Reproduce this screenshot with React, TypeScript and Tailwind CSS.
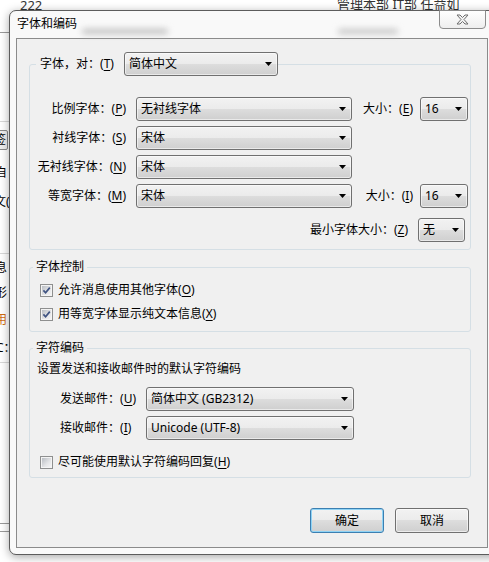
import React from 'react';

// Win7 style "字体和编码" dialog over a blurred mail client

function Arrow() {
  return (
    <svg width="7" height="4" viewBox="0 0 7 4" className="shrink-0">
      <path d="M0 0H7L3.5 4Z" fill="#000" />
    </svg>
  );
}

function Combo({ value, cls }: { value: string; cls: string }) {
  return (
    <div
      className={`flex h-[24px] shrink-0 items-center justify-between rounded-[3px] border border-[#707070] bg-[linear-gradient(#f2f2f2_0%,#ebebeb_50%,#dddddd_50%,#cfcfcf_100%)] pl-[4px] pr-[5px] shadow-[inset_0_0_0_1px_rgba(255,255,255,0.55)] ${cls}`}
    >
      <span className="whitespace-nowrap">{value}</span>
      <Arrow />
    </div>
  );
}

function Key({ text, k }: { text: string; k: string }) {
  return (
    <>
      {text}(<span className="underline underline-offset-[2px]">{k}</span>)
    </>
  );
}

function Check({ checked }: { checked: boolean }) {
  return (
    <span className="flex h-[13px] w-[13px] shrink-0 items-center justify-center border border-[#8e8f8f] bg-[#f4f4f4]">
      <span className="flex h-[9px] w-[9px] items-center justify-center bg-[linear-gradient(135deg,#b9bdc3_0%,#e4e5e7_60%,#f4f4f5_100%)]">
        {checked && (
          <svg width="9" height="9" viewBox="0 0 9 9">
            <path d="M1.4 4.4L3.6 6.8L7.8 1.6" fill="none" stroke="#3f5382" strokeWidth="1.7" />
          </svg>
        )}
      </span>
    </span>
  );
}

function Button({ label, primary }: { label: string; primary?: boolean }) {
  return (
    <div
      className={`flex h-[25px] w-[74px] items-center justify-center rounded-[3px] border bg-[linear-gradient(#f2f2f2_0%,#ebebeb_50%,#dddddd_50%,#cfcfcf_100%)] ${
        primary
          ? 'border-[#3c7fb1] shadow-[inset_0_0_0_1px_#8fd3f5]'
          : 'border-[#707070] shadow-[inset_0_0_0_1px_rgba(255,255,255,0.6)]'
      }`}
    >
      {label}
    </div>
  );
}

export default function App() {
  return (
    <div className="relative h-[562px] w-[489px] overflow-hidden bg-white font-['Noto_Sans','Noto_Sans_CJK_SC',sans-serif] text-[12px] leading-[16px] text-black">
      {/* mail client behind the dialog */}
      <span className="absolute left-[20px] top-[1px] text-[13px] leading-[9px] text-[#333]">222</span>
      <span className="absolute left-[337px] top-[-1px] text-[13px] leading-[11px] text-[#333]">管理本部 IT部 任益如</span>
      <div className="absolute left-0 top-[32px] h-px w-[10px] bg-[#9a9a9a]" />
      <div className="absolute left-0 top-[121px] h-px w-[10px] bg-[#d8d8d8]" />
      <div className="absolute left-[-8px] top-[130px] flex h-[20px] w-[16px] items-center justify-end rounded-[2px] border border-[#8a8a8a] bg-[#eeeeee] pr-[1px] text-[12px]">签</div>
      <span className="absolute left-[-5px] top-[165px] text-[12px]">自</span>
      <span className="absolute left-[-6px] top-[194px] text-[12px]">文(</span>
      <div className="absolute left-0 top-[253px] h-px w-[10px] bg-[#d8d8d8]" />
      <span className="absolute left-[-5px] top-[260px] text-[12px]">息</span>
      <span className="absolute left-[-5px] top-[285px] text-[12px]">形</span>
      <span className="absolute left-[-5px] top-[312px] text-[12px] text-[#d06a10]">用</span>
      <span className="absolute left-[-4px] top-[340px] text-[12px]">C：</span>
      <div className="absolute left-0 top-[362px] h-px w-[10px] bg-[#d8d8d8]" />
      <div className="absolute left-0 top-[523px] h-px w-[10px] bg-[#9a9a9a]" />
      <div className="absolute left-0 top-[531px] h-px w-[10px] bg-[#9a9a9a]" />

      {/* dialog window */}
      <div className="absolute left-[9px] top-[10px] h-[545px] w-[500px] rounded-l-[7px] border border-[#5c5c5c] bg-[#f9f9f9] shadow-[0_2px_10px_rgba(0,0,0,0.35)]">
        <div className="absolute left-[72px] top-[18px] h-[5px] w-[86px] rounded-full bg-[#bdbdbd] blur-[3px]" />
        <div className="absolute left-[328px] top-[18px] h-[5px] w-[60px] rounded-full bg-[#c4c4c4] blur-[3px]" />

        {/* close button */}
        <div className="absolute left-[429px] top-[-1px] flex h-[19px] w-[47px] items-center justify-center rounded-b-[4px] border border-[#8c8c8c] bg-[linear-gradient(#ffffff,#eeeeee)]">
          <svg width="13" height="11" viewBox="0 0 13 11">
            <path
              d="M1 1H4L6.5 3.5L9 1H12L8 5.5L12 10H9L6.5 7.5L4 10H1L5 5.5Z"
              fill="#f2f2f2"
              stroke="#6f6f6f"
              strokeWidth="1"
              strokeLinejoin="round"
            />
          </svg>
        </div>

        <div className="relative flex h-[27px] items-center pb-[2px] pl-[7px]">字体和编码</div>

        <div className="ml-[6px] h-[510px] w-[472px] border border-[#8b8b8b] bg-[#f0f0f0] pt-[13px]">
          {/* fonts */}
          <fieldset className="ml-[12px] w-[442px] rounded-[3px] border border-[#d5dfe5] pb-[7px]">
            <legend className="ml-[6px] flex items-center pl-[4px]">
              <span className="w-[84px] whitespace-nowrap">
                <Key text="字体，对：" k="T" />
              </span>
              <Combo value="简体中文" cls="w-[154px]" />
            </legend>

            <div className="flex flex-col gap-[5px] pt-[21px]">
              <div className="flex h-[24px] items-center">
                <span className="w-[96px] whitespace-nowrap text-right">
                  <Key text="比例字体：" k="P" />
                </span>
                <Combo value="无衬线字体" cls="ml-[10px] w-[216px]" />
                <span className="w-[61px] whitespace-nowrap text-right">
                  <Key text="大小：" k="E" />
                </span>
                <Combo value="16" cls="ml-[7px] w-[48px]" />
              </div>
              <div className="flex h-[24px] items-center">
                <span className="w-[96px] whitespace-nowrap text-right">
                  <Key text="衬线字体：" k="S" />
                </span>
                <Combo value="宋体" cls="ml-[10px] w-[216px]" />
              </div>
              <div className="flex h-[24px] items-center">
                <span className="w-[96px] whitespace-nowrap text-right">
                  <Key text="无衬线字体：" k="N" />
                </span>
                <Combo value="宋体" cls="ml-[10px] w-[216px]" />
              </div>
              <div className="flex h-[24px] items-center">
                <span className="w-[96px] whitespace-nowrap text-right">
                  <Key text="等宽字体：" k="M" />
                </span>
                <Combo value="宋体" cls="ml-[10px] w-[216px]" />
                <span className="w-[61px] whitespace-nowrap text-right">
                  <Key text="大小：" k="I" />
                </span>
                <Combo value="16" cls="ml-[7px] w-[48px]" />
              </div>
            </div>

            <div className="mt-[10px] flex h-[24px] items-center justify-end pr-[5px]">
              <span className="whitespace-nowrap">
                <Key text="最小字体大小：" k="Z" />
              </span>
              <Combo value="无" cls="ml-[10px] w-[47px]" />
            </div>
          </fieldset>

          {/* font control */}
          <fieldset className="ml-[12px] mt-[9px] w-[442px] rounded-[3px] border border-[#d5dfe5] pb-[9px]">
            <legend className="ml-[3px] px-[3px]">字体控制</legend>
            <div className="mt-[7px] flex h-[16px] items-center pl-[10px]">
              <Check checked />
              <span className="ml-[5px]">
                <Key text="允许消息使用其他字体" k="O" />
              </span>
            </div>
            <div className="mt-[8px] flex h-[16px] items-center pl-[10px]">
              <Check checked />
              <span className="ml-[5px]">
                <Key text="用等宽字体显示纯文本信息" k="X" />
              </span>
            </div>
          </fieldset>

          {/* charset */}
          <fieldset className="ml-[12px] mt-[8px] w-[442px] rounded-[3px] border border-[#d5dfe5] pb-[7px]">
            <legend className="ml-[3px] px-[3px]">字符编码</legend>
            <div className="mt-[5px] h-[16px] pl-[7px]">设置发送和接收邮件时的默认字符编码</div>
            <div className="mt-[10px] flex h-[24px] items-center pl-[30px]">
              <span className="w-[86px] whitespace-nowrap">
                <Key text="发送邮件：" k="U" />
              </span>
              <Combo value="简体中文 (GB2312)" cls="w-[208px]" />
            </div>
            <div className="mt-[5px] flex h-[24px] items-center pl-[30px]">
              <span className="w-[86px] whitespace-nowrap">
                <Key text="接收邮件：" k="I" />
              </span>
              <Combo value="Unicode (UTF-8)" cls="w-[208px]" />
            </div>
            <div className="mt-[14px] flex h-[16px] items-center pl-[10px]">
              <Check checked={false} />
              <span className="ml-[5px]">
                <Key text="尽可能使用默认字符编码回复" k="H" />
              </span>
            </div>
          </fieldset>

          <div className="mt-[30px] flex justify-end gap-[11px] pr-[18px]">
            <Button label="确定" primary />
            <Button label="取消" />
          </div>
        </div>
      </div>
    </div>
  );
}
